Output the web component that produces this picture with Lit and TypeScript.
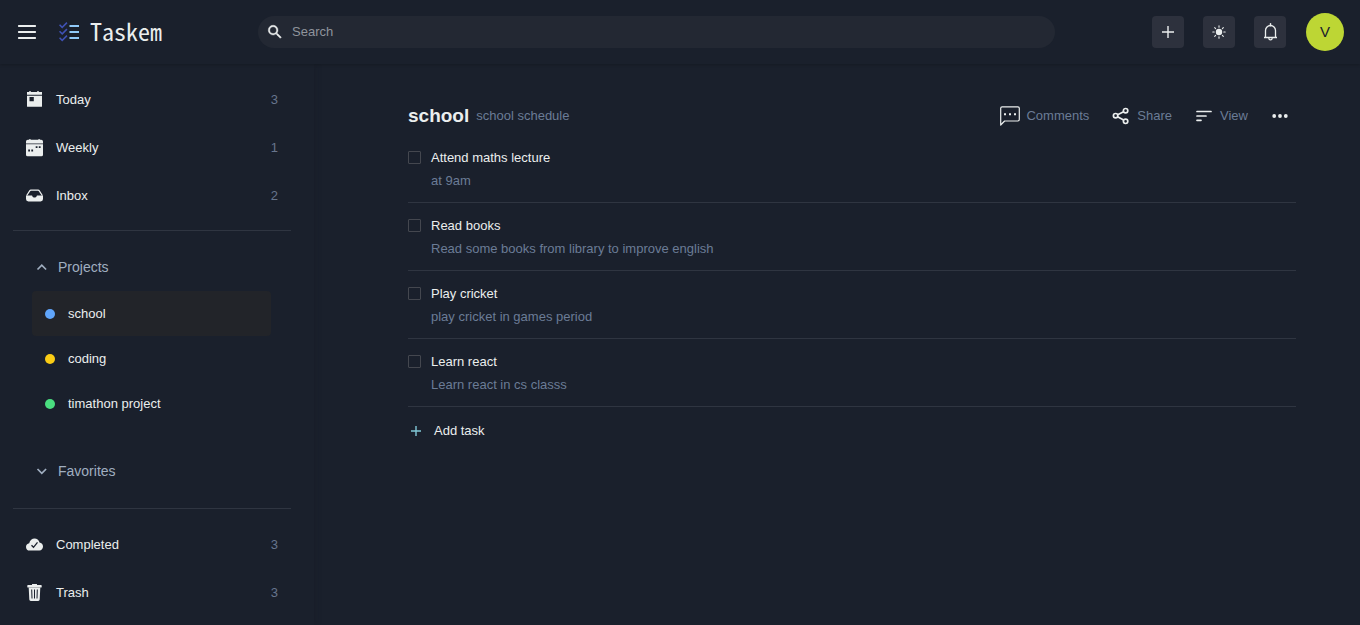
import { LitElement, html, css, svg } from "lit";
import { customElement, property } from "lit/decorators.js";
import { classMap } from "lit/directives/class-map.js";
import { styleMap } from "lit/directives/style-map.js";

const icon = (size: number, box: number, body: unknown, top = 0) => html`<svg
  width=${size} height=${size} viewBox="0 ${top} ${box} ${box}" aria-hidden="true" fill="none">${body}</svg>`;

const icons = {
  menu: icon(22, 22, svg`<path d="M2.8 5h16.4M2.8 11h16.4M2.8 17h16.4" stroke="currentColor" stroke-width="1.8" stroke-linecap="round"/>`),
  logo: icon(24, 48, svg`
    <g fill="#3F51B5"><path d="M18.800 17.100l-8.400 8.300-4.200-4.100L4 23.500l6.400 6.400 10.600-10.600z"/><path d="M18.800 4.100l-8.400 8.300-4.200-4.100L4 10.500l6.400 6.400L21 6.300z"/><path d="M18.800 30.100l-8.400 8.300-4.200-4.100L4 36.500l6.400 6.400 10.600-10.600z"/></g>
    <path fill="#90CAF9" d="M25 22h19v4H25zM25 10h19v4H25zM25 34h19v4H25z"/>`),
  search: icon(18, 24, svg`<path fill="currentColor" stroke="currentColor" stroke-width=".5" d="M15.500 14h-.79l-.28-.27A6.471 6.471 0 0 0 16 9.500 6.500 6.500 0 1 0 9.500 16c1.610 0 3.090-.59 4.230-1.570l.27.28v.79l5 4.990L20.490 19l-4.990-5zm-6 0C7.010 14 5 11.990 5 9.500S7.010 5 9.500 5 14 7.010 14 9.500 11.990 14 9.500 14z"/>`),
  plus: icon(16, 16, svg`<path d="M8 2v12M2 8h12" stroke="currentColor" stroke-width="1.4"/>`),
  add: icon(16, 16, svg`<path d="M8 3v10M3 8h10" stroke="currentColor" stroke-width="1.4"/>`),
  sun: icon(16, 16, svg`<circle cx="8" cy="8" r="3.200" fill="currentColor"/><path d="M8 1.800v1.400M8 12.800v1.400M1.800 8h1.400M12.800 8h1.400M3.700 3.700l.9.9M11.400 11.400l.9.9M12.300 3.700l-.9.9M4.600 11.400l-.9.9" stroke="currentColor" stroke-width="1.100" stroke-linecap="round"/>`),
  bell: icon(18, 18, svg`<path d="M4.500 14V7.500a5 5 0 0 1 10 0V14M3 14.500h13" stroke="currentColor" stroke-width="1.300"/><path d="M9.500 .8v2" stroke="currentColor" stroke-width="1.500" stroke-linecap="round"/><path d="M7.800 15a1.700 1.900 0 0 0 3.400 0" stroke="currentColor" stroke-width="1.200"/>`),
  today: icon(18, 18, svg`<path fill="currentColor" fill-rule="evenodd" d="M2 2h2.300V.8h1.400V2h6.600V.8h1.400V2H17v2.800H2zM2 5.700h15v10.600a.5.5 0 0 1-.5.5h-14a.5.5 0 0 1-.5-.5zM4.500 7v4.200h4.300V7z"/>`, 1),
  week: icon(18, 18, svg`<path fill="currentColor" d="M1 5V3.600a1.800 1.800 0 0 1 1.800-1.800h1.500V1h1.200v.8h8V1h1.200v.8h1.500A1.800 1.800 0 0 1 18 3.600V5z"/><path fill="currentColor" opacity=".5" d="M1 5h17v1.200H1z"/><path fill="currentColor" fill-rule="evenodd" d="M1 6.200h17V16.700a1.600 1.600 0 0 1-1.600 1.600H2.600A1.600 1.600 0 0 1 1 16.700zM10.700 8.200V10h1.800V8.200zM13.800 8.200V10h1.800V8.200zM3.200 11.600v1.800H5v-1.800zM6.300 11.600v1.800h1.800v-1.800z"/>`, 1),
  inbox: icon(18, 18, svg`<path d="M1.700 9.500 4.700 4.900a1.500 1.500 0 0 1 1.200-.7h7.200a1.500 1.500 0 0 1 1.200.7l3 4.600" stroke="currentColor" stroke-width="1.200"/><path fill="currentColor" d="M1 9.600h5.700c.5 0 .5.400.8 1 .5 1.300 3.500 1.300 4 0 .3-.6.300-1 .8-1H18v3.400a2.400 2.400 0 0 1-2.400 2.400H3.400A2.400 2.400 0 0 1 1 13z"/>`, 1),
  done: icon(18, 18, svg`<path fill="currentColor" d="M4.800 15.500A3.800 3.800 0 0 1 1 11.900c0-2 1.300-3.300 3.200-3.700.7-3.100 2.900-4.700 5.400-4.700 2.300 0 4.200 1.400 4.900 4 2 .3 3.500 1.800 3.500 4s-1.500 4-3.600 4z"/><path d="m6.500 10.200 2 2.100 4-5" stroke="#1a202c" stroke-width="1.300"/>`, 1),
  trash: icon(18, 18, svg`<path fill="currentColor" d="M7 2v-.6c0-.4.300-.6.600-.6h3.800c.3 0 .6.200.6.600V2h4c.4 0 .7.300.7.600V4c0 .4-.3.600-.7.600H3c-.4 0-.7-.2-.7-.6V2.600c0-.3.300-.6.700-.6z"/><path fill="currentColor" d="M3.700 4.500h11.600l-.6 12a1.500 1.500 0 0 1-1.500 1.400H5.800a1.500 1.500 0 0 1-1.500-1.400z"/><path d="M6.700 6.500l.3 9M9.500 6.500v9M12.300 6.500l-.3 9" stroke="#1a202c" stroke-width="1"/>`, 1),
  up: icon(14, 14, svg`<path d="m2.500 9.500 4.300-4.300 4.300 4.300" stroke="currentColor" stroke-width="1.700"/>`),
  down: icon(14, 14, svg`<path d="m2.500 5 4.300 4.300L11.100 5" stroke="currentColor" stroke-width="1.700"/>`),
  comment: icon(20, 20, svg`<path d="M.7 19V2.200C.7 1.400 1.300.8 2.100.8h15.800c.8 0 1.400.6 1.400 1.400v11.400c0 .8-.6 1.400-1.400 1.400H4.600z" stroke="currentColor" stroke-width="1.200" stroke-linejoin="round"/><path fill="currentColor" d="M4 7.200h2v2H4zM9 7.200h2v2H9zM14 7.200h2v2h-2z"/>`),
  share: icon(18, 18, svg`<g stroke="currentColor" stroke-width="1.700"><circle cx="3.600" cy="8.700" r="2.200"/><circle cx="13.600" cy="3.700" r="2.200"/><circle cx="13.600" cy="14.300" r="2.200"/><path d="m5.600 7.700 6-3M5.600 9.800l6 3.300"/></g>`),
  view: icon(18, 18, svg`<path d="M2 4.500h14M2 9h9M2 13.300h4" stroke="currentColor" stroke-width="1.700" stroke-linecap="round"/>`),
  more: icon(18, 18, svg`<g fill="currentColor"><circle cx="3.200" cy="9" r="1.900"/><circle cx="9" cy="9" r="1.900"/><circle cx="14.800" cy="9" r="1.900"/></g>`),
};

const base = css`
  :host, *, *::before { box-sizing: border-box; }
  svg { display: block; flex: none; }
  button {
    margin: 0; padding: 0; border: 0; background: none;
    color: inherit; font: inherit; text-align: left; cursor: pointer;
  }
  a { color: inherit; text-decoration: none; }
  h1, p, ul { margin: 0; padding: 0; list-style: none; }
`;

@customElement("task-header")
export class TaskHeader extends LitElement {
  static styles = [base, css`
    :host { display: block; }
    .bar {
      display: flex; align-items: center; height: 64px; padding: 0 16px;
      background: #1a202c; box-shadow: 0 1px 3px rgba(0, 0, 0, 0.2);
    }
    .brand { display: flex; align-items: center; flex: 0 0 242px; }
    .home { display: flex; align-items: center; gap: 9px; margin-left: 19px; }
    .name {
      padding-bottom: 2px; color: #ebeeee;
      font: 24px/32px "Noto Sans Mono CJK SC", "Noto Sans Mono CJK JP", "Liberation Mono", monospace;
    }
    .search {
      display: flex; align-items: center; gap: 8px; flex: 1; min-width: 120px;
      height: 32px; padding: 0 8px; border-radius: 16px; background: #232833;
    }
    .search input {
      flex: 1; min-width: 0; padding: 0; border: 0; outline: 0; background: none;
      color: #ebeeee; font: inherit;
    }
    .search input::placeholder { color: #8f949c; opacity: 1; }
    .actions { display: flex; align-items: center; gap: 19px; margin: 0 20px 0 97px; }
    .square {
      display: grid; place-items: center; width: 32px; height: 32px;
      border-radius: 4px; background: #2d313d;
    }
    .avatar {
      width: 38px; height: 38px; border-radius: 50%; background: #bdd634;
      color: #1a202c; font-size: 15px; text-align: center;
    }
  `];

  render() {
    return html`<header class="bar">
      <div class="brand">
        <button aria-label="Toggle sidebar">${icons.menu}</button>
        <a class="home" href="#">${icons.logo}<span class="name">Taskem</span></a>
      </div>
      <label class="search">${icons.search}<input type="text" placeholder="Search" aria-label="Search"></label>
      <div class="actions">
        <button class="square" aria-label="New task">${icons.plus}</button>
        <button class="square" aria-label="Toggle theme">${icons.sun}</button>
        <button class="square" aria-label="Notifications">${icons.bell}</button>
      </div>
      <button class="avatar" aria-label="Account">V</button>
    </header>`;
  }
}

@customElement("task-sidebar")
export class TaskSidebar extends LitElement {
  static styles = [base, css`
    :host { display: block; flex: 0 0 314px; box-shadow: 1px 0 6px rgba(24, 24, 32, 0.3); }
    nav { padding: 12px 23px 0 13px; }
    .link {
      display: flex; align-items: center; gap: 13px; height: 48px; padding: 0 13px 0 12px;
    }
    .count { margin-left: auto; color: #67758c; }
    .group { padding: 12px 20px 0 19px; margin-top: 10px; border-top: 1px solid #2f3541; }
    .toggle {
      display: flex; align-items: center; gap: 9px; width: 100%; height: 48px;
      padding-left: 3px; color: #a0aec0; font-size: 14px;
    }
    .project {
      display: flex; align-items: center; gap: 13px; height: 45px; padding: 0 13px;
      border-radius: 4px;
    }
    .active { background: #222429; }
    .dot { width: 10px; height: 10px; border-radius: 50%; }
    .favorites { margin-top: 21px; }
    .last { margin-top: 13px; padding-top: 12px; border-top: 1px solid #2f3541; }
  `];

  private link(glyph: unknown, label: string, count: number) {
    return html`<li><a class="link" href="#">${glyph}<span>${label}</span><span class="count">${count}</span></a></li>`;
  }

  render() {
    const projects = [
      { name: "school", color: "#60a5fa", active: true },
      { name: "coding", color: "#facc15", active: false },
      { name: "timathon project", color: "#4ade80", active: false },
    ];
    return html`<nav aria-label="Tasks">
      <ul>
        ${this.link(icons.today, "Today", 3)}
        ${this.link(icons.week, "Weekly", 1)}
        ${this.link(icons.inbox, "Inbox", 2)}
      </ul>
      <div class="group">
        <button class="toggle" aria-expanded="true">${icons.up}Projects</button>
        <ul>
          ${projects.map((p) => html`<li><a href="#" class=${classMap({ project: true, active: p.active })}>
            <span class="dot" style=${styleMap({ background: p.color })}></span>${p.name}</a></li>`)}
        </ul>
        <button class="toggle favorites" aria-expanded="false">${icons.down}Favorites</button>
      </div>
      <ul class="last">
        ${this.link(icons.done, "Completed", 3)}
        ${this.link(icons.trash, "Trash", 3)}
      </ul>
    </nav>`;
  }
}

@customElement("task-item")
export class TaskItem extends LitElement {
  @property() name = "";
  @property() note = "";

  static styles = [base, css`
    :host { display: block; }
    .task {
      display: grid; grid-template-columns: 13px 1fr; column-gap: 10px; align-items: center;
      padding: 11px 0 10px; border-bottom: 1px solid #2f3541;
    }
    input {
      appearance: none; width: 13px; height: 13px; margin: 0;
      border: 1px solid #44474f; border-radius: 1px;
    }
    input:checked { background: #718096; }
    label { line-height: 23px; }
    p { grid-column: 2; line-height: 23px; color: #6b7c96; }
  `];

  render() {
    return html`<div class="task">
      <input type="checkbox" id="done"><label for="done">${this.name}</label>
      <p>${this.note}</p>
    </div>`;
  }
}

@customElement("task-board")
export class TaskBoard extends LitElement {
  static styles = [base, css`
    :host { display: block; flex: 1; min-width: 0; padding: 36px 64px 0 94px; }
    .head { display: flex; align-items: center; height: 32px; margin-bottom: 3px; }
    h1 { font-size: 19px; line-height: 32px; }
    .about { margin-left: 7px; color: #6b7c96; }
    .tools { display: flex; align-items: center; gap: 23px; margin-left: auto; padding-right: 7px; }
    .tool { display: flex; align-items: center; gap: 7px; }
    .tool:first-child { gap: 6px; }
    .tool span { color: #6b7c96; }
    .add { display: flex; align-items: center; gap: 10px; height: 48px; }
    .add svg { color: #81c7d6; }
  `];

  render() {
    const tasks = [
      ["Attend maths lecture", "at 9am"],
      ["Read books", "Read some books from library to improve english"],
      ["Play cricket", "play cricket in games period"],
      ["Learn react", "Learn react in cs classs"],
    ];
    return html`<main>
      <div class="head">
        <h1>school</h1><p class="about">school schedule</p>
        <div class="tools">
          <button class="tool">${icons.comment}<span>Comments</span></button>
          <button class="tool">${icons.share}<span>Share</span></button>
          <button class="tool">${icons.view}<span>View</span></button>
          <button class="tool" aria-label="More">${icons.more}</button>
        </div>
      </div>
      ${tasks.map(([name, note]) => html`<task-item .name=${name} .note=${note}></task-item>`)}
      <button class="add">${icons.add}Add task</button>
    </main>`;
  }
}

@customElement("app-root")
export class AppRoot extends LitElement {
  static styles = [base, css`
    :host {
      display: flex; flex-direction: column; min-height: 100vh;
      background: #1a202c; color: #ebeeee;
      font: 13px/20px "Liberation Sans", Arial, sans-serif;
    }
    .top { position: relative; z-index: 1; }
    .body { display: flex; flex: 1; }
  `];

  render() {
    return html`<task-header class="top"></task-header>
      <div class="body"><task-sidebar></task-sidebar><task-board></task-board></div>`;
  }
}
